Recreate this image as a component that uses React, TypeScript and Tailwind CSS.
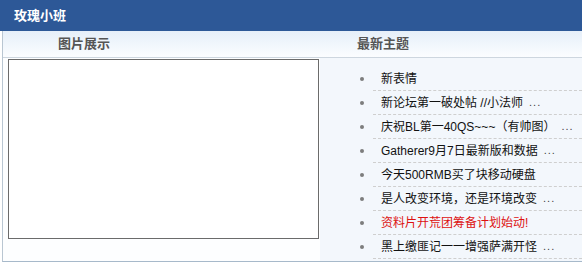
import React from "react";

const items: { t: string; more?: boolean; red?: boolean }[] = [
  { t: "新表情" },
  { t: "新论坛第一破处帖 //小法师", more: true },
  { t: "庆祝BL第一40QS~~~（有帅图）", more: true },
  { t: "Gatherer9月7日最新版和数据", more: true },
  { t: "今天500RMB买了块移动硬盘" },
  { t: "是人改变环境，还是环境改变", more: true },
  { t: "资料片开荒团筹备计划始动!", red: true },
  { t: "黑上缴匪记一一增强萨满开怪", more: true },
];

export default function App() {
  return (
    <div
      className="w-[582px] h-[264px] bg-white overflow-hidden"
      style={{ fontFamily: '"Liberation Sans", "Noto Sans CJK SC", sans-serif' }}
    >
      <div className="h-[31px] bg-[#2d5897] flex items-center pl-[14px]">
        <span className="text-white font-bold text-[13px] leading-none">玫瑰小班</span>
      </div>
      <div className="ml-[2px] border-l border-[#b9c6d2] border-b border-b-[#a7b9ca] h-[231px] flex flex-col">
        <div className="h-[27px] shrink-0 flex items-center bg-gradient-to-b from-[#e6eff9] to-[#fbfdff] border-b border-[#cdd6df]">
          <span className="ml-[55px] text-[13px] font-bold text-[#555]">图片展示</span>
          <span className="ml-[247px] text-[13px] font-bold text-[#555]">最新主题</span>
        </div>
        <div className="flex flex-1">
          <div className="w-[317px] shrink-0 bg-[#fdfeff] pl-[5px] pt-[1px]">
            <div className="w-[311px] h-[180px] border border-[#6b6b6b] bg-white" />
          </div>
          <div className="flex-1 bg-[#f3f7fc] pt-[9px]">
            {items.map((it, i) => (
              <div key={i} className="h-[24px] flex items-center relative">
                <span className="w-[4px] h-[4px] rounded-full bg-[#7d7d7d] ml-[40px]" />
                <div className="ml-[9px] flex-1 h-full flex items-center border-b border-dashed border-[#cfcfcf] pl-[8px]">
                  <span className={`text-[12px] whitespace-nowrap ${it.red ? "text-[#dd1111]" : "text-[#111]"}`}>
                    {it.t}
                  </span>
                  {it.more && <span className="text-[11px] text-[#444] ml-[6px] tracking-[1px]">...</span>}
                </div>
              </div>
            ))}
          </div>
        </div>
      </div>
    </div>
  );
}
